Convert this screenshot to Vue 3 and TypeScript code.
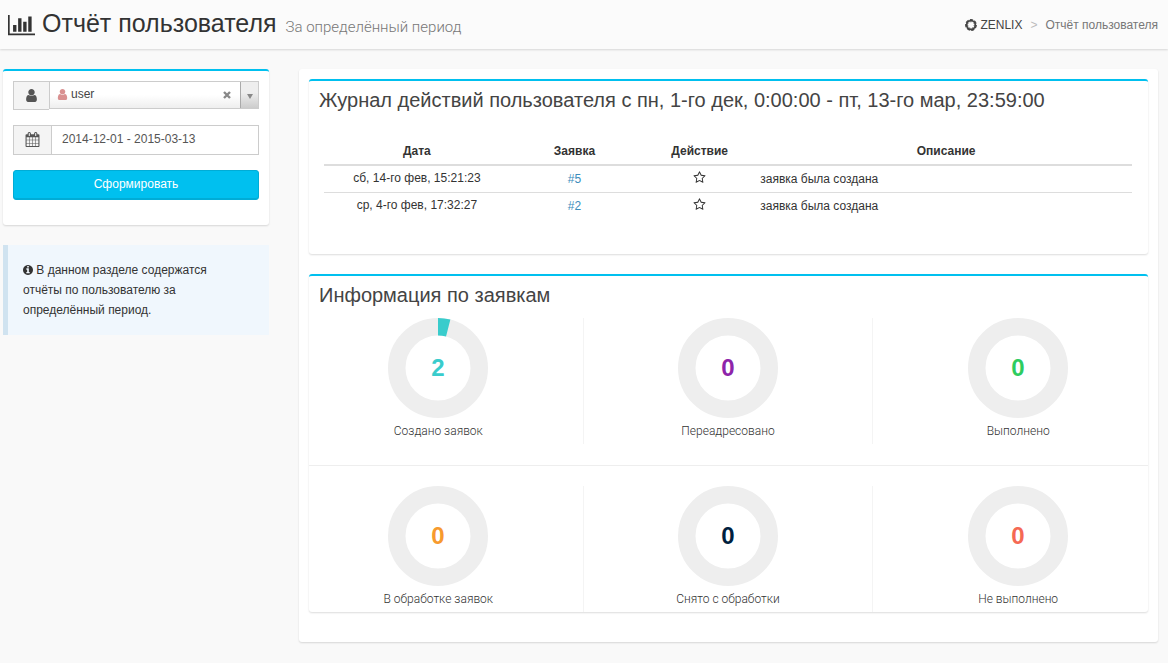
<script setup lang="ts">
import { ref } from 'vue'

interface LogRow {
  date: string
  ticket: string
  text: string
}

interface Stat {
  value: number
  label: string
  color: string
  share: number
}

const user = ref('user')
const period = ref('2014-12-01 - 2015-03-13')

const log: LogRow[] = [
  { date: 'сб, 14-го фев, 15:21:23', ticket: '#5', text: 'заявка была создана' },
  { date: 'ср, 4-го фев, 17:32:27', ticket: '#2', text: 'заявка была создана' },
]

const statRows: Stat[][] = [
  [
    { value: 2, label: 'Создано заявок', color: '#39cccc', share: 4 },
    { value: 0, label: 'Переадресовано', color: '#8e24aa', share: 0 },
    { value: 0, label: 'Выполнено', color: '#2ecc5f', share: 0 },
  ],
  [
    { value: 0, label: 'В обработке заявок', color: '#f79a2e', share: 0 },
    { value: 0, label: 'Снято с обработки', color: '#001f3f', share: 0 },
    { value: 0, label: 'Не выполнено', color: '#f56954', share: 0 },
  ],
]

const userPath =
  'M1536 1399q0 109-62.5 187t-150.5 78h-854q-88 0-150.5-78t-62.5-187q0-85 8.5-160.5t31.5-152 58.5-131 94-89 134.5-34.5q131 128 313 128t313-128q76 0 134.5 34.5t94 89 58.5 131 31.5 152 8.5 160.5zm-256-887q0 159-112.5 271.5t-271.5 112.5-271.5-112.5-112.5-271.5 112.5-271.5 271.5-112.5 271.5 112.5 112.5 271.5z'
</script>

<template>
  <div class="page">
    <header class="top">
      <h1>
        <svg class="chart" viewBox="0 0 2048 1792" aria-hidden="true"><path d="M640 896v512h-256v-512h256zm384-512v1024h-256v-1024h256zm1024 1152v128h-2048v-1536h128v1408h1920zm-640-896v768h-256v-768h256zm384-384v1152h-256v-1152h256z" /></svg>
        <span>Отчёт пользователя</span>
        <small>За определённый период</small>
      </h1>
      <nav class="crumbs">
        <a href="#">
          <svg class="brand" viewBox="0 0 12 12" aria-hidden="true">
            <circle cx="6" cy="6" r="4.3" fill="none" stroke="currentColor" stroke-width="1.8" />
            <circle cx="6" cy="6" r="5.3" fill="none" stroke="currentColor" stroke-width="1.2" pathLength="70" stroke-dasharray="7 3" />
            <circle cx="6" cy="6" r="3.2" fill="none" stroke="currentColor" stroke-width="0.8" pathLength="70" stroke-dasharray="4 6" />
          </svg>
          <span>ZENLIX</span>
        </a>
        <span class="sep">&gt;</span>
        <span class="current">Отчёт пользователя</span>
      </nav>
    </header>

    <div class="layout">
      <aside>
        <form class="box filter" @submit.prevent>
          <div class="group">
            <span class="addon user-addon"><svg viewBox="0 0 1792 1792" aria-hidden="true"><path :d="userPath" /></svg></span>
            <div class="chosen">
              <button type="button" class="choice" aria-label="Пользователь">
                <svg viewBox="0 0 1792 1792" aria-hidden="true"><path :d="userPath" /></svg>
                <span>{{ user }}</span>
              </button>
              <button type="button" class="clear" aria-label="Очистить" @click="user = ''">
                <svg viewBox="0 0 8 8" aria-hidden="true"><path d="M1 1l6 6M7 1l-6 6" fill="none" stroke="currentColor" stroke-width="2.400" /></svg>
              </button>
              <button type="button" class="drop" aria-label="Открыть список">
                <svg viewBox="0 0 6 5" aria-hidden="true"><path d="M0 0h6L3 5z" /></svg>
              </button>
            </div>
          </div>
          <div class="group">
            <label class="addon date-addon" for="period" aria-label="Период"><svg viewBox="0 0 1792 1792" aria-hidden="true"><path d="M192 1664h288v-288h-288v288zm352 0h320v-288h-320v288zm-352-352h288v-320h-288v320zm352 0h320v-320h-320v320zm-352-384h288v-288h-288v288zm736 736h320v-288h-320v288zm-384-736h320v-288h-320v288zm768 736h288v-288h-288v288zm-384-352h320v-320h-320v320zm-352-864v-288q0-13-9.5-22.500t-22.500-9.500h-64q-13 0-22.500 9.500t-9.500 22.500v288q0 13 9.500 22.500t22.500 9.500h64q13 0 22.500-9.500t9.500-22.500zm736 864h288v-320h-288v320zm-384-384h320v-288h-320v288zm384 0h288v-288h-288v288zm32-480v-288q0-13-9.500-22.500t-22.500-9.500h-64q-13 0-22.500 9.500t-9.500 22.500v288q0 13 9.500 22.500t22.500 9.500h64q13 0 22.500-9.500t9.500-22.500zm384-64v1280q0 52-38 90t-90 38h-1408q-52 0-90-38t-38-90v-1280q0-52 38-90t90-38h128v-96q0-66 47-113t113-47h64q66 0 113 47t47 113v96h384v-96q0-66 47-113t113-47h64q66 0 113 47t47 113v96h128q52 0 90 38t38 90z" /></svg></label>
            <input id="period" v-model="period" type="text" />
          </div>
          <button type="submit" class="submit">Сформировать</button>
        </form>
        <p class="callout">
          <svg viewBox="0 0 1536 1792" aria-hidden="true"><path transform="translate(-128 0)" d="M1152 1376v-160q0-14-9-23t-23-9h-96v-512q0-14-9-23t-23-9h-320q-14 0-23 9t-9 23v160q0 14 9 23t23 9h96v320h-96q-14 0-23 9t-9 23v160q0 14 9 23t23 9h448q14 0 23-9t9-23zm-128-896v-160q0-14-9-23t-23-9h-192q-14 0-23 9t-9 23v160q0 14 9 23t23 9h192q14 0 23-9t9-23zm640 416q0 209-103 385.500t-279.500 279.500-385.500 103-385.500-103-279.500-279.500-103-385.500 103-385.500 279.500-279.500 385.500-103 385.500 103 279.500 279.500 103 385.500z" /></svg>
          В данном разделе содержатся отчёты по пользователю за определённый период.
        </p>
      </aside>

      <main class="panel">
        <section class="box journal">
          <h2>Журнал действий пользователя с пн, 1-го дек, 0:00:00 - пт, 13-го мар, 23:59:00</h2>
          <table>
            <thead>
              <tr>
                <th class="c-date">Дата</th>
                <th class="c-ticket">Заявка</th>
                <th class="c-action">Действие</th>
                <th>Описание</th>
              </tr>
            </thead>
            <tbody>
              <tr v-for="row in log" :key="row.ticket">
                <td class="small">{{ row.date }}</td>
                <td><a href="#">{{ row.ticket }}</a></td>
                <td class="small">
                  <svg viewBox="0 0 1792 1792" role="img" aria-label="Создана"><path d="M1201 1004l306-297-422-62-189-382-189 382-422 62 306 297-73 421 378-199 377 199zm527-357q0 22-26 48l-363 354 86 500q1 7 1 20 0 50-41 50-19 0-40-12l-449-236-449 236q-22 12-40 12-21 0-31.500-14.500t-10.500-35.500q0-6 2-20l86-500-364-354q-25-27-25-48 0-37 56-46l502-73 225-455q19-41 49-41t49 41l225 455 502 73q56 9 56 46z" /></svg>
                </td>
                <td class="desc">{{ row.text }}</td>
              </tr>
            </tbody>
          </table>
        </section>

        <section class="box info">
          <h2>Информация по заявкам</h2>
          <template v-for="(stats, i) in statRows" :key="i">
            <hr v-if="i > 0" />
            <div class="stats">
              <div v-for="stat in stats" :key="stat.label" class="stat">
                <svg class="knob" viewBox="0 0 100 100" role="img" :aria-label="stat.label">
                  <circle cx="50" cy="50" r="41.250" fill="none" stroke="#eee" stroke-width="17.500" />
                  <circle
                    v-if="stat.share"
                    cx="50"
                    cy="50"
                    r="41.250"
                    fill="none"
                    :stroke="stat.color"
                    stroke-width="17.500"
                    pathLength="100"
                    :stroke-dasharray="`${stat.share} 100`"
                    transform="rotate(-90 50 50)"
                  />
                  <text x="50" y="58" text-anchor="middle" :fill="stat.color">{{ stat.value }}</text>
                </svg>
                <div class="label">{{ stat.label }}</div>
              </div>
            </div>
          </template>
        </section>
      </main>
    </div>
  </div>
</template>

<style>
body {
  background: #f9f9f9;
}
</style>

<style scoped>
.page {
  min-height: 100vh;
  box-sizing: border-box;
  color: #333;
  font: 12px/20px "Liberation Sans", Arial, sans-serif;
}
.page *,
.page *::before {
  box-sizing: border-box;
}
svg {
  fill: currentColor;
  flex: none;
}
button,
input {
  font: inherit;
  border-radius: 0;
  margin: 0;
}
a {
  color: #3c8dbc;
  text-decoration: none;
}
.top {
  display: flex;
  align-items: center;
  justify-content: space-between;
  height: 49px;
  padding: 0 10px 0 8px;
  background: #fbfbfb;
  box-shadow: 0 1px 2px rgba(0, 0, 0, 0.14);
}
h1 {
  display: flex;
  align-items: baseline;
  margin: 0;
  font-size: 25px;
  line-height: 30px;
  font-weight: 400;
}
.chart {
  width: 27px;
  height: 24px;
  margin-right: 7px;
  align-self: center;
}
h1 small {
  margin-left: 9px;
  font-family: Roboto, "Liberation Sans", sans-serif;
  font-size: 15px;
  font-weight: 300;
  color: #777;
}
.crumbs {
  display: flex;
  align-items: center;
}
.crumbs a {
  display: flex;
  align-items: center;
  gap: 3px;
  color: #444;
}
.brand {
  width: 12px;
  height: 12px;
}
.sep {
  padding: 0 8px;
  color: #bbb;
}
.current {
  color: #777;
}
.layout {
  display: grid;
  grid-template-columns: minmax(0, 266fr) minmax(0, 859fr);
  gap: 30px;
  align-items: start;
  padding: 20px 10px 20px 3px;
}
.box {
  background: #fff;
  border-top: 2px solid #00c0ef;
  border-radius: 3px;
  box-shadow: 0 1px 2px rgba(0, 0, 0, 0.14);
}
.filter {
  padding: 10px 10px 25px;
}
.group {
  display: flex;
  align-items: flex-start;
  margin-bottom: 15px;
}
.addon {
  display: flex;
  align-items: center;
  justify-content: center;
  border: 1px solid #ccc;
  border-right: 0;
  background: #f4f4f4;
  color: #555;
}
.user-addon {
  width: 36px;
  height: 29px;
}
.date-addon {
  width: 38px;
  height: 30px;
  padding-bottom: 2px;
}
.addon svg {
  width: 15px;
  height: 15px;
}
.chosen {
  display: flex;
  flex: 1;
  height: 28px;
  border: 1px solid #ccc;
  background: linear-gradient(#fff 50%, #eee);
}
.chosen button {
  display: flex;
  align-items: center;
  border: 0;
  background: none;
  color: #888;
}
.chosen .choice {
  flex: 1;
  gap: 2px;
  padding: 0 0 2px 6px;
  color: #444;
}
.choice svg {
  width: 13px;
  height: 13px;
  color: #d99090;
}
.chosen .clear {
  padding: 0 9px;
}
.clear svg {
  width: 8px;
  height: 8px;
}
.chosen .drop {
  width: 18px;
  padding: 2px 0 0;
  justify-content: center;
  border-left: 1px solid #aaa;
  background: linear-gradient(#eee 40%, #ccc);
}
.drop svg {
  width: 6px;
  height: 5px;
}
input {
  flex: 1;
  min-width: 0;
  height: 30px;
  padding: 0 10px 2px;
  border: 1px solid #ccc;
  background: #fff;
  color: #555;
}
.submit {
  display: block;
  width: 100%;
  height: 30px;
  padding: 0 0 2px;
  border: 1px solid #00acd6;
  border-radius: 3px;
  background: #00c0ef;
  box-shadow: inset 0 -1px 0 #00acd6;
  color: #fff;
}
.callout {
  margin: 20px 0 0;
  padding: 15px 30px 15px 15px;
  border-left: 5px solid #d0e3f0;
  background: #f0f7fd;
}
.callout svg {
  width: 10px;
  height: 12px;
  vertical-align: -2px;
}
.panel {
  padding: 10px 10px 30px;
  background: #fff;
  border-radius: 3px;
  box-shadow: 0 1px 2px rgba(0, 0, 0, 0.14);
}
h2 {
  margin: 0;
  padding: 7px 10px 0;
  font-size: 20px;
  line-height: 24px;
  font-weight: 400;
  color: #444;
}
.journal {
  margin-bottom: 20px;
  padding-bottom: 35px;
}
table {
  width: calc(100% - 31px);
  margin: 26px 16px 0 15px;
  border-collapse: separate;
  border-spacing: 0;
  table-layout: fixed;
}
th {
  height: 28px;
  padding: 0;
  border-bottom: 2px solid #ddd;
}
.c-date {
  width: 23%;
}
.c-ticket {
  width: 16%;
}
.c-action {
  width: 15%;
}
td {
  padding: 3px 0;
  text-align: center;
  vertical-align: top;
}
td.small {
  padding-top: 2px;
}
td svg {
  width: 13px;
  height: 13px;
  vertical-align: -2px;
}
td.desc {
  text-align: left;
}
tbody tr + tr td {
  border-top: 1px solid #ddd;
}
.info h2 {
  padding-bottom: 11px;
}
.stats {
  display: grid;
  grid-template-columns: repeat(3, minmax(0, 1fr));
  margin: 0 -15px;
}
.stat {
  height: 126px;
  text-align: center;
}
.stat:not(:last-child) {
  border-right: 1px solid #f4f4f4;
}
.knob {
  display: block;
  width: 100px;
  height: 100px;
  margin: 0 auto 3px;
}
.knob text {
  font: bold 24px "Liberation Sans", Arial, sans-serif;
}
.label {
  font-family: Roboto, "Liberation Sans", sans-serif;
  font-weight: 300;
  color: #333;
}
hr {
  height: 1px;
  margin: 21px 0 20px;
  border: 0;
  background: #eee;
}
</style>
